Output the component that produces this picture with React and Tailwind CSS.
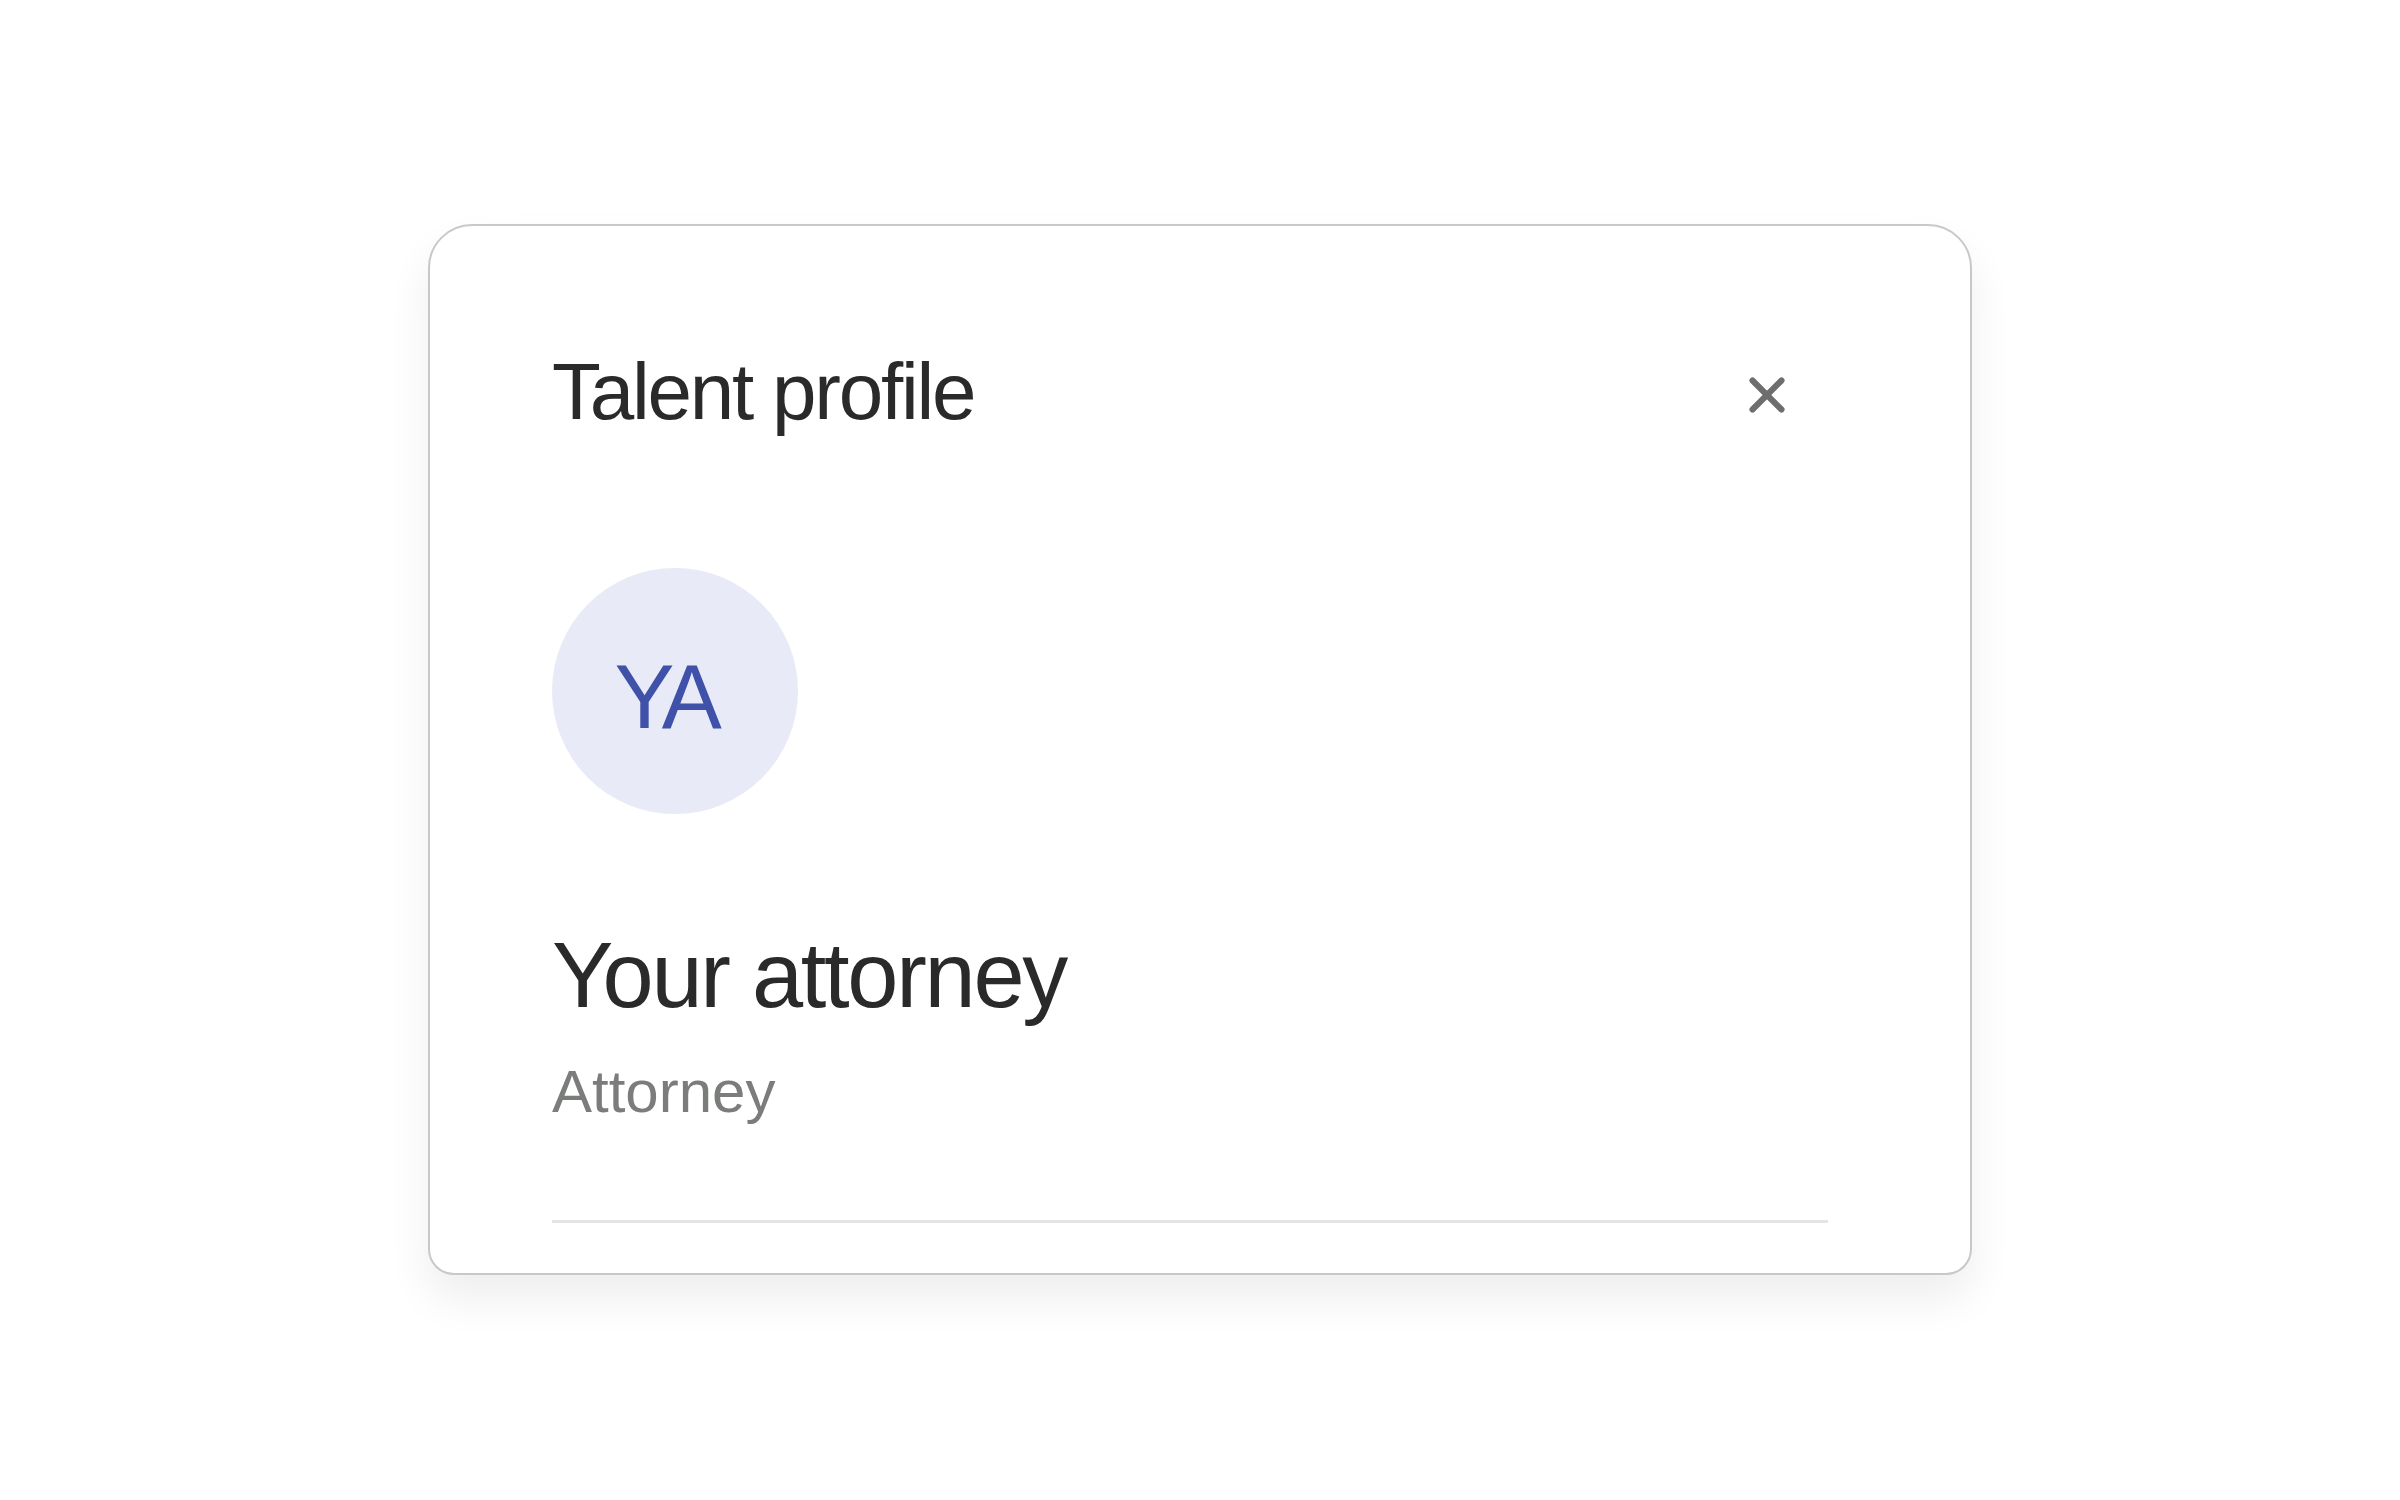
import { X } from 'lucide-react';

const font = { fontFamily: '"Liberation Sans", Arial, sans-serif' };

export default function App() {
    return (
        <div className="min-h-screen w-full bg-white flex justify-center items-start pt-[224px]" style={font}>
            <div className="w-[1544px] bg-white border-2 border-[#c8c8c8] rounded-t-[44px] rounded-b-[26px] shadow-[0_24px_44px_rgba(0,0,0,0.07)] pl-[122px] pr-[142px] pt-[118px] pb-[50px]">
                {/* Header */}
                <div className="flex items-center justify-between h-[96px]">
                    <h1 className="text-[80px] leading-[96px] font-normal text-[#2a2a2a] tracking-[-0.028em]">
                        Talent profile
                    </h1>
                    <button className="w-[58px] h-[58px] mr-[32px] mt-[6px] flex items-center justify-center text-[#6e6e6e]">
                        <X className="w-[58px] h-[58px]" strokeWidth={2.5} />
                    </button>
                </div>

                {/* Avatar */}
                <div className="mt-[128px] w-[246px] h-[246px] rounded-full bg-[#e8ebf7] flex items-center justify-center">
                    <span className="text-[90px] leading-none text-[#3f51a8] tracking-[-0.07em] pr-[20px] pt-[12px]">YA</span>
                </div>

                {/* Name + role */}
                <div className="mt-[105px] text-[92px] leading-[112px] text-[#2a2a2a] tracking-[-0.025em]">
                    Your attorney
                </div>
                <div className="mt-[25px] text-[60px] leading-[72px] text-[#7b7d7b]">
                    Attorney
                </div>

                <div className="mt-[92px] h-[3px] bg-[#e4e4e2]" />
            </div>
        </div>
    );
}
